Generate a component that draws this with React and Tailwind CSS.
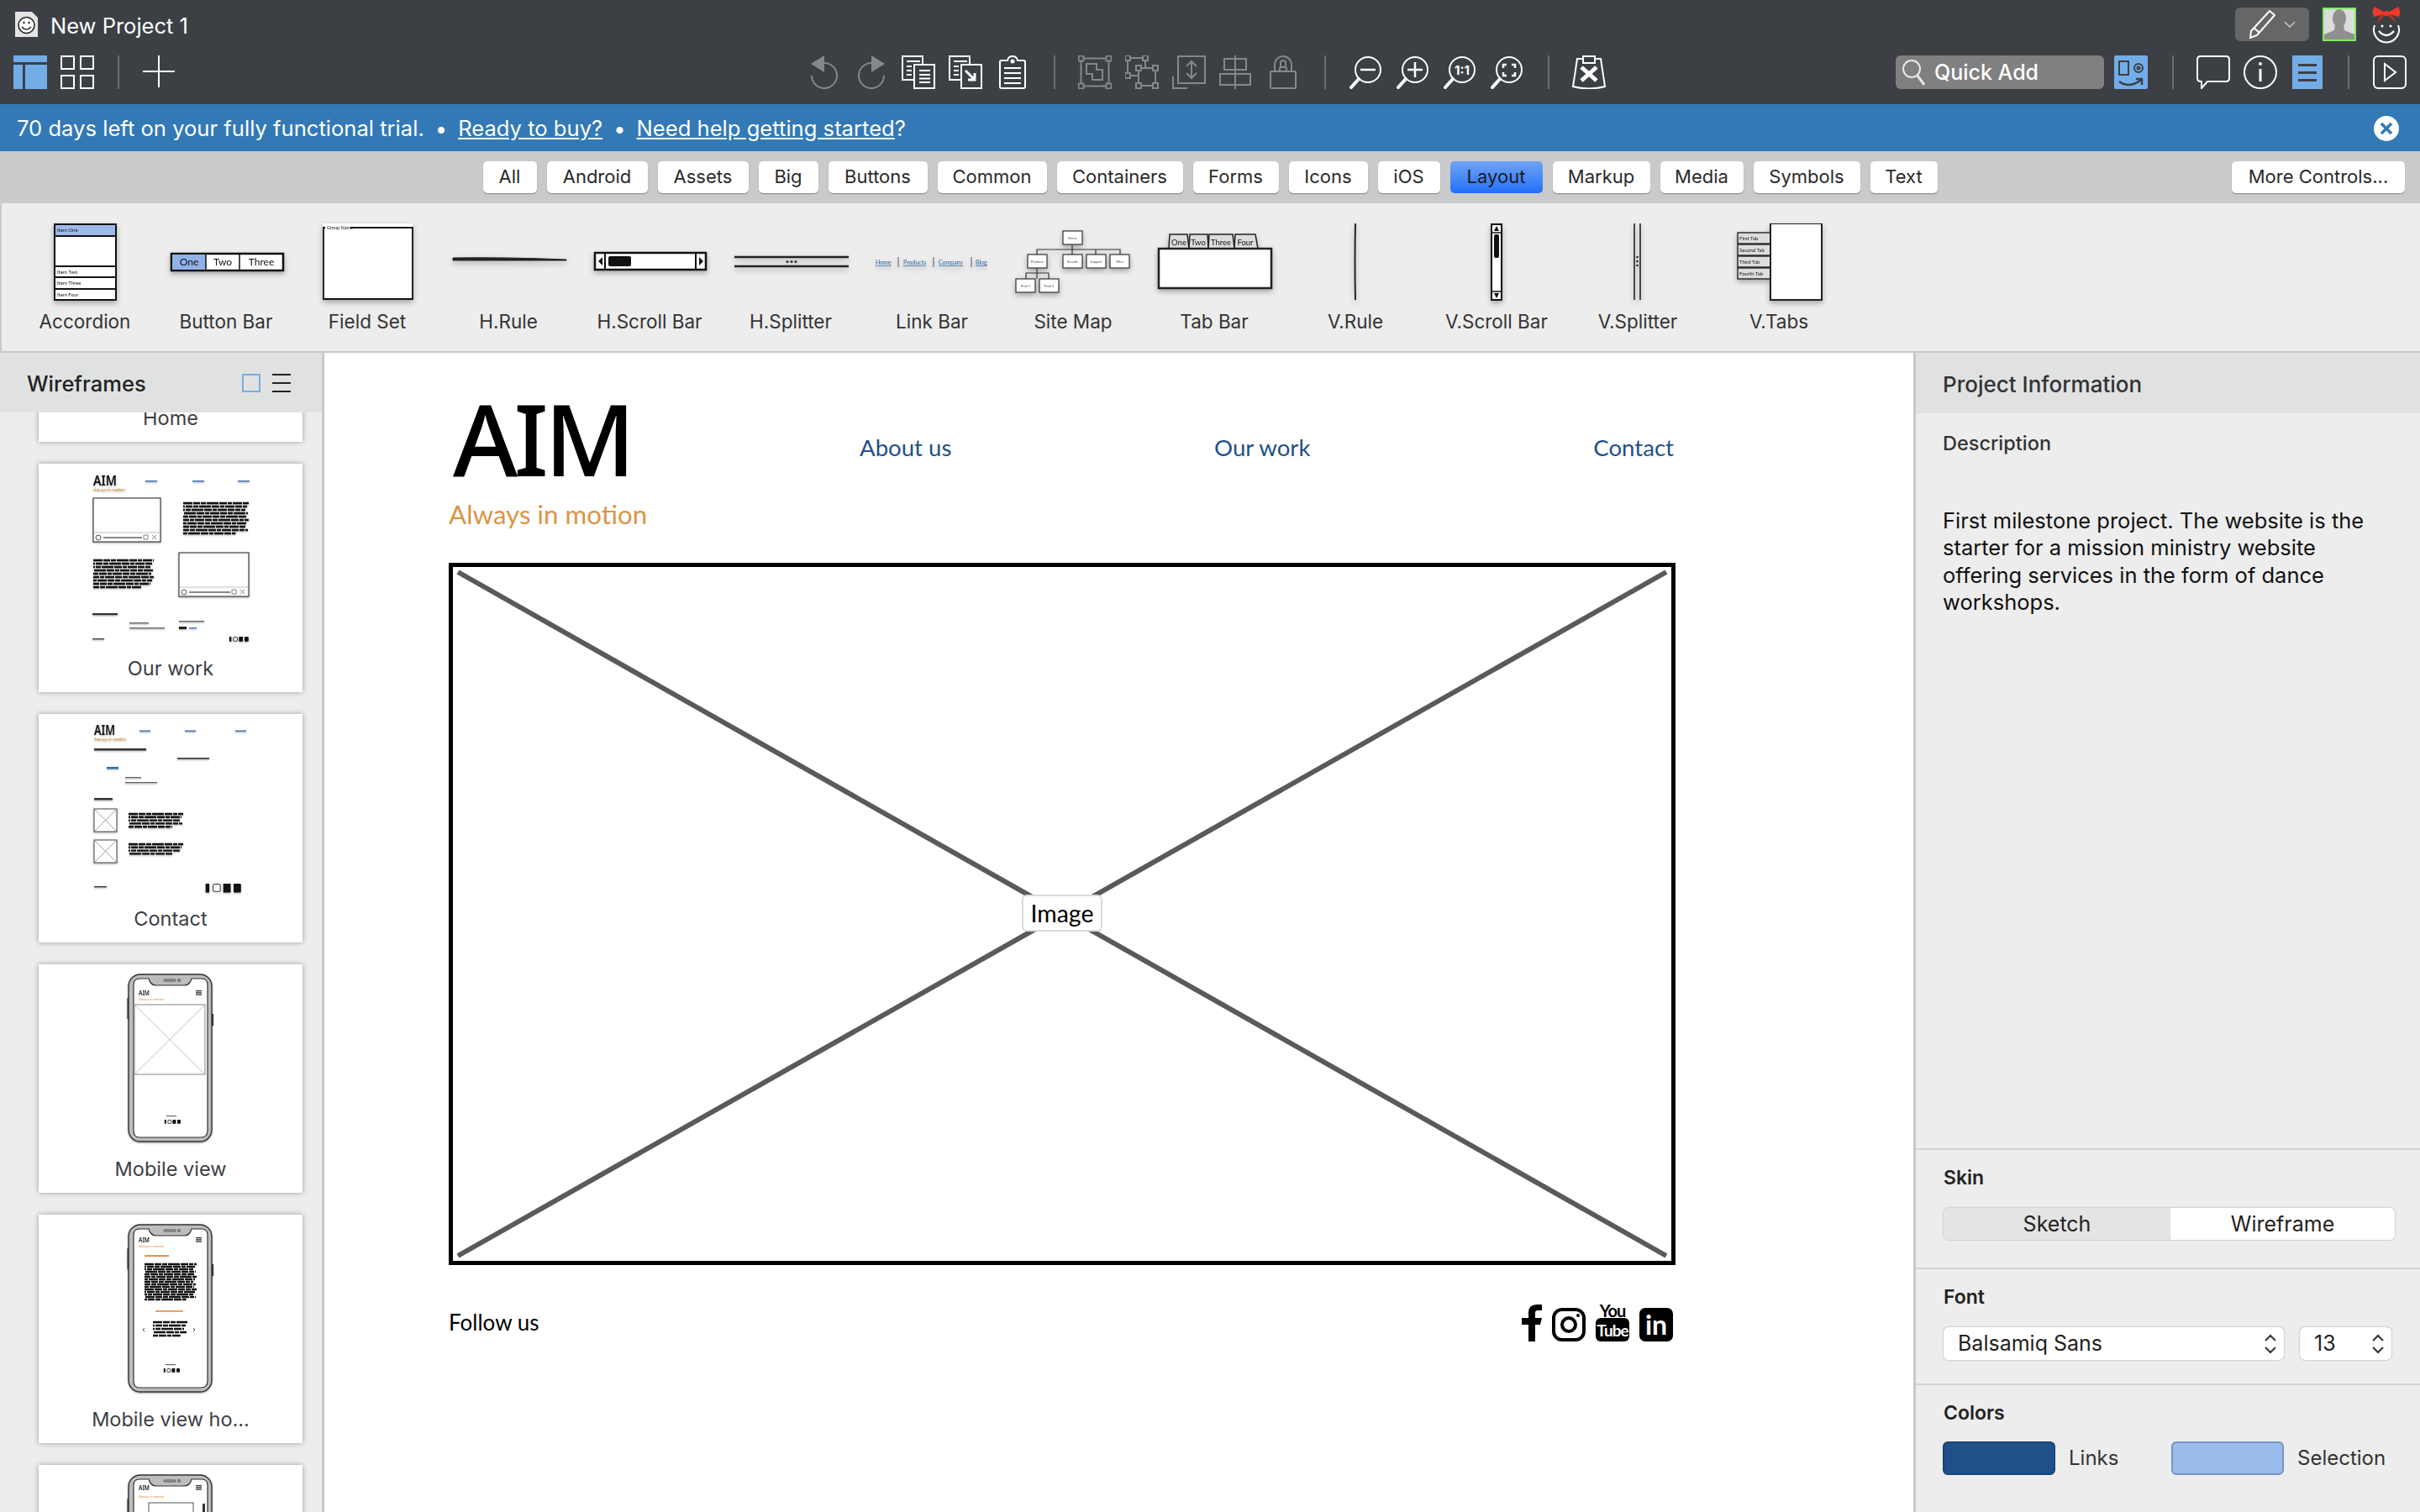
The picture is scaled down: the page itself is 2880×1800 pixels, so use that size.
import React from 'react';

const ui = { fontFamily: 'Inter, "Liberation Sans", sans-serif' };
const sketch = { fontFamily: 'Lato, "Open Sans", sans-serif' };

const filters = [
  ['All', 'w-[64px]'], ['Android', 'w-[120px]'], ['Assets', 'w-[108px]'], ['Big', 'w-[71px]'],
  ['Buttons', 'w-[118px]'], ['Common', 'w-[130px]'], ['Containers', 'w-[150px]'], ['Forms', 'w-[102px]'],
  ['Icons', 'w-[94px]'], ['iOS', 'w-[74px]'], ['Layout', 'w-[110px]'], ['Markup', 'w-[116px]'],
  ['Media', 'w-[99px]'], ['Symbols', 'w-[127px]'], ['Text', 'w-[80px]'],
];

const Sep = () => <div className="w-[2px] h-[40px] bg-[#6b6f73] shrink-0" />;

const Icon = ({ w = 40, children, className = 'text-white' }) => (
  <svg width={w} height="40" viewBox={`0 0 ${w} 40`} fill="none" stroke="currentColor" strokeWidth="2" className={`shrink-0 ${className}`}>
    {children}
  </svg>
);

const Magnifier = ({ children }) => (
  <Icon w={38}>
    <circle cx="22" cy="17" r="15" />
    <path d="M11 28 L2 38" strokeWidth="4" strokeLinecap="round" />
    {children}
  </Icon>
);

const Handle = ({ x, y }) => <rect x={x - 3} y={y - 3} width="6" height="6" fill="#3c4045" />;

function Toolbar() {
  const gray = 'text-[#84888c] ';
  return (
    <div className="flex items-center h-[40px] mt-[22px] pl-[16px]">
      {/* left view switch */}
      <div className="w-[40px] h-[40px] flex flex-col gap-[3px] shrink-0">
        <div className="h-[8px] bg-[#72ade8]" />
        <div className="flex-1 flex gap-[3px]">
          <div className="w-[11px] bg-[#72ade8]" />
          <div className="flex-1 bg-[#72ade8]" />
        </div>
      </div>
      <div className="w-[40px] h-[40px] ml-[16px] grid grid-cols-2 gap-x-[6px] gap-y-[6px] shrink-0">
        <div className="border-2 border-white" /><div className="border-2 border-white" />
        <div className="border-2 border-white" /><div className="border-2 border-white" />
      </div>
      <div className="ml-[28px]"><Sep /></div>
      <div className="ml-[28px]">
        <Icon w={38}><path d="M19 0 V38 M0 19 H38" /></Icon>
      </div>

      {/* edit group */}
      <div className="ml-[757px]">
        <Icon w={34} className={gray}>
          <path d="M16 9 A15 15 0 1 1 1 24" />
          <path d="M16 0 V20 L0 10 Z" fill="currentColor" stroke="none" />
        </Icon>
      </div>
      <div className="ml-[22px]">
        <Icon w={33} className={gray}>
          <path d="M16 9 A15 15 0 1 0 31 24" />
          <path d="M16 0 V20 L32 10 Z" fill="currentColor" stroke="none" />
        </Icon>
      </div>
      <div className="ml-[19px]">
        <Icon w={40}>
          <rect x="1" y="1" width="24" height="28" />
          <path d="M6 7 H22 M6 13 H12 M6 18 H12 M6 23 H12" />
          <rect x="15" y="11" width="24" height="28" fill="#3c4045" />
          <path d="M21 18 H34 M21 23 H34 M21 27.5 H34 M21 32 H34" />
        </Icon>
      </div>
      <div className="ml-[16px]">
        <Icon w={40}>
          <rect x="1" y="1" width="24" height="28" />
          <path d="M6 7 H22 M6 13 H12 M6 18 H12 M6 23 H12" />
          <rect x="15" y="11" width="24" height="28" fill="#3c4045" />
          <path d="M20 18 L31 29 M31 21 V29 H23" strokeWidth="3" />
        </Icon>
      </div>
      <div className="ml-[20px]">
        <Icon w={32}>
          <path d="M10 6 H3 Q1 6 1 8 V37 Q1 39 3 39 H29 Q31 39 31 37 V8 Q31 6 29 6 H22 Q21 1 16 1 Q11 1 10 6 Z" />
          <circle cx="16" cy="7" r="2.5" fill="currentColor" stroke="none" />
          <path d="M6 15 H26 M6 21 H26 M6 27 H26 M6 33 H26" />
        </Icon>
      </div>
      <div className="ml-[33px]"><Sep /></div>

      {/* arrange group */}
      <div className="ml-[27px]">
        <Icon w={40} className={gray}>
          <rect x="3.5" y="3.5" width="33" height="33" />
          <Handle x={3.5} y={3.5} /><Handle x={36.5} y={3.5} /><Handle x={3.5} y={36.5} /><Handle x={36.5} y={36.5} />
          <path d="M10 10 H22 V17 H29 V29 H17 V22 H10 Z" />
        </Icon>
      </div>
      <div className="ml-[16px]">
        <Icon w={40} className={gray}>
          <path d="M3 3 H24 V15 M3 3 V24 H16" />
          <rect x="16" y="15" width="20" height="21" />
          <Handle x={3} y={3} /><Handle x={24} y={3} /><Handle x={3} y={24} />
          <Handle x={16} y={15} /><Handle x={36} y={15} /><Handle x={16} y={36} /><Handle x={36} y={36} />
        </Icon>
      </div>
      <div className="ml-[16px]">
        <Icon w={40} className={gray}>
          <path d="M1 25 V39 H18" />
          <rect x="7" y="1" width="32" height="32" />
          <path d="M23 7 V27 M17 13 L23 7 L29 13 M17 21 L23 27 L29 21" />
        </Icon>
      </div>
      <div className="ml-[16px]">
        <Icon w={38} className={gray}>
          <path d="M19 0 V40" />
          <rect x="6" y="4" width="26" height="13" />
          <rect x="1" y="22" width="36" height="13" />
        </Icon>
      </div>
      <div className="ml-[22px]">
        <Icon w={32} className={gray}>
          <path d="M6 19 V11 A10 10 0 0 1 26 11 V19 M12 19 V14 M20 19 V14 M13 14 V9 A3 3 0 0 1 19 9 V14 Z" />
          <rect x="1" y="19" width="30" height="20" rx="1" />
        </Icon>
      </div>
      <div className="ml-[33px]"><Sep /></div>

      {/* zoom group */}
      <div className="ml-[28px] flex items-center gap-[18px] shrink-0">
        <Magnifier><path d="M13 17 H31" strokeWidth="2.5" /></Magnifier>
        <Magnifier><path d="M13 17 H31 M22 8 V26" strokeWidth="2.5" /></Magnifier>
        <Magnifier>
          <text x="22" y="22.5" textAnchor="middle" fontSize="15" fontWeight="700" fill="currentColor" stroke="none" fontFamily="Inter, sans-serif">1:1</text>
        </Magnifier>
        <Magnifier><path d="M15 15 V11 H19 M25 11 H29 V15 M29 20 V24 H25 M19 24 H15 V20" strokeWidth="2.5" /></Magnifier>
      </div>
      <div className="ml-[30px]"><Sep /></div>
      <div className="ml-[27px]">
        <Icon w={40}>
          <path d="M13 4 H6 L1 37 Q20 42 39 37 L34 4 H27" />
          <rect x="13" y="1" width="14" height="8" />
          <path d="M11 14 L29 30 M29 14 L11 30" strokeWidth="5" />
        </Icon>
      </div>

      {/* quick add and right side */}
      <div className="ml-[345px] w-[248px] h-[40px] bg-[#808080] rounded-[6px] flex items-center pl-[6px] gap-[10px] shrink-0">
        <svg width="30" height="32" viewBox="0 0 30 32" fill="none" stroke="#e8e8e8" strokeWidth="2"><circle cx="13" cy="12" r="10" /><path d="M20 20 L28 31" strokeWidth="3" /></svg>
        <span className="text-[25px] font-medium text-white leading-none" style={ui}>Quick Add</span>
      </div>
      <div className="ml-[12px] w-[40px] h-[40px] bg-[#72ade8] rounded-[2px] shrink-0">
        <svg width="40" height="40" viewBox="0 0 40 40" fill="none" stroke="#3c4045" strokeWidth="2">
          <rect x="6" y="7" width="11" height="16" /><circle cx="29" cy="15" r="5" /><circle cx="29" cy="15" r="1.5" />
          <path d="M6 31 Q18 40 32 29 M26 28 H33 V35" strokeWidth="2.5" />
        </svg>
      </div>
      <div className="ml-[29px]"><Sep /></div>
      <div className="ml-[27px]">
        <Icon w={40}>
          <path d="M5 1 H35 Q39 1 39 5 V27 Q39 31 35 31 H13 L6 39 V31 H5 Q1 31 1 27 V5 Q1 1 5 1 Z" />
        </Icon>
      </div>
      <div className="ml-[16px]">
        <Icon w={40}>
          <circle cx="20" cy="20" r="19" />
          <circle cx="20" cy="10" r="2" fill="currentColor" stroke="none" />
          <path d="M20 16 V31" strokeWidth="3" />
        </Icon>
      </div>
      <div className="ml-[18px] w-[36px] h-[40px] bg-[#72ade8] flex flex-col justify-center items-center gap-[6px] shrink-0">
        <div className="w-[22px] h-[3px] bg-[#3c4045]" />
        <div className="w-[22px] h-[3px] bg-[#3c4045]" />
        <div className="w-[22px] h-[3px] bg-[#3c4045]" />
      </div>
      <div className="ml-[30px]"><Sep /></div>
      <div className="ml-[28px]">
        <Icon w={40}>
          <rect x="1" y="1" width="38" height="38" rx="5" />
          <path d="M14 10 L27 20 L14 30 Z" />
        </Icon>
      </div>
    </div>
  );
}

function TitleRow() {
  return (
    <div className="flex items-center h-[44px] pt-[14px] pl-[18px] pr-[20px]">
      <svg width="27" height="30" viewBox="0 0 27 30" className="shrink-0">
        <path d="M0 0 H20 L27 7 V30 H0 Z" fill="#e4e4e4" />
        <circle cx="13.5" cy="16" r="9.5" fill="#fff" stroke="#222" strokeWidth="1.6" />
        <path d="M8 18 Q13.5 24 19 18" fill="none" stroke="#222" strokeWidth="1.6" />
        <circle cx="10.5" cy="13" r="1.2" fill="#222" /><circle cx="16.5" cy="13" r="1.2" fill="#222" />
      </svg>
      <span className="ml-[15px] mt-[3px] text-[25.5px] text-white leading-none" style={ui}>New Project 1</span>
      <div className="ml-auto flex items-center">
        <div className="w-[88px] h-[40px] bg-[#646668] rounded-[6px] flex items-center pl-[16px] gap-[10px]">
          <svg width="32" height="34" viewBox="0 0 32 34" fill="none" stroke="#fff" strokeWidth="2"><path d="M25 1 L31 6 L10 30 L2 33 L3 25 Z M6 21 L13 27" /></svg>
          <svg width="14" height="8" viewBox="0 0 14 8" fill="none" stroke="#c9c9c9" strokeWidth="1.5"><path d="M1 1 L7 7 L13 1" /></svg>
        </div>
        <div className="ml-[16px] w-[40px] h-[40px] border-2 border-[#7bf05d] bg-[#dcdcdc] overflow-hidden">
          <svg width="36" height="36" viewBox="0 0 36 36" fill="#8f8f8f"><ellipse cx="18" cy="11" rx="8" ry="11" /><path d="M13 18 H23 L24 25 L36 30 V36 H0 V30 L12 25 Z" /></svg>
        </div>
        <div className="ml-[16px]">
          <svg width="40" height="46" viewBox="0 0 40 46" fill="none">
            <path d="M20 10 L6 2 Q2 8 5 14 Z M20 10 L34 2 Q38 8 35 14 Z" fill="#ee3a2b" />
            <path d="M20 10 L8 22 L14 11 Z M20 10 L32 22 L26 11 Z" fill="#d22d20" />
            <circle cx="20" cy="10" r="3" fill="#ee3a2b" />
            <path d="M6 24 A15 15 0 1 0 34 24" stroke="#fff" strokeWidth="2" />
            <path d="M11 31 Q20 41 29 31" stroke="#fff" strokeWidth="2.5" />
            <circle cx="15" cy="25" r="1.5" fill="#fff" /><circle cx="25" cy="25" r="1.5" fill="#fff" />
          </svg>
        </div>
      </div>
    </div>
  );
}

function TrialBanner() {
  return (
    <div className="h-[56px] bg-[#3379b5] flex items-center pt-[2px] pl-[20px] pr-[25px] text-white text-[25.6px]" style={ui}>
      <span>70 days left on your fully functional trial.</span>
      <span className="mx-[13px]">•</span>
      <span className="underline">Ready to buy?</span>
      <span className="mx-[13px]">•</span>
      <span><span className="underline">Need help getting started</span>?</span>
      <svg width="30" height="30" viewBox="0 0 30 30" className="ml-auto">
        <circle cx="15" cy="15" r="15" fill="#fff" />
        <path d="M9 9 L21 21 M21 9 L9 21" stroke="#3379b5" strokeWidth="3.5" />
      </svg>
    </div>
  );
}

function FilterBar() {
  return (
    <div className="h-[60px] bg-[#c9cacc] flex items-center pt-[1px]" style={ui}>
      <div className="flex-1" />
      <div className="flex gap-[12px]">
        {filters.map(([name, w]) => (
          <div
            key={name}
            className={`${w} h-[38px] rounded-[5px] flex items-center justify-center text-[22px] ${
              name === 'Layout'
                ? 'bg-gradient-to-b from-[#6fa3f3] to-[#1f6ff8] text-[#1b1b1b]'
                : 'bg-white text-[#2a2a2a] shadow-[0_1px_1px_rgba(0,0,0,0.35)]'
            }`}
          >
            {name}
          </div>
        ))}
      </div>
      <div className="flex-1 flex justify-end">
        <div className="w-[206px] h-[38px] mr-[18px] rounded-[5px] bg-white shadow-[0_1px_1px_rgba(0,0,0,0.35)] flex items-center justify-center text-[22px] text-[#2a2a2a]">
          More Controls...
        </div>
      </div>
    </div>
  );
}

// small sketches of the library controls, all share a 168x98 box
const Label = ({ x, y, s = 6, a, fill = '#111', children, u }) => (
  <text x={x} y={y} fontSize={s} textAnchor={a} fill={fill} textDecoration={u ? 'underline' : undefined} fontFamily="Lato, sans-serif" stroke="none">{children}</text>
);

const library = [
  ['Accordion', (
    <g>
      <rect x="48" y="1" width="73" height="90" fill="#fff" stroke="#111" strokeWidth="2" />
      <rect x="48" y="1" width="73" height="14" fill="#9dbbe9" stroke="#111" strokeWidth="2" />
      <path d="M48 51 H121 M48 64 H121 M48 78 H121" stroke="#111" strokeWidth="1.8" />
      <Label x="51" y="10">Item One</Label><Label x="51" y="60">Item Two</Label>
      <Label x="51" y="73">Item Three</Label><Label x="51" y="87">Item Four</Label>
    </g>
  )],
  ['Button Bar', (
    <g>
      <rect x="19" y="36" width="133" height="20" fill="#fff" stroke="#111" strokeWidth="2.5" />
      <rect x="20" y="37" width="40" height="18" fill="#8fb2e8" />
      <path d="M60 36 V56 M100 36 V56" stroke="#111" strokeWidth="1.5" />
      <Label x="40" y="50" s={12} a="middle">One</Label><Label x="80" y="50" s={12} a="middle">Two</Label><Label x="126" y="50" s={12} a="middle">Three</Label>
    </g>
  )],
  ['Field Set', (
    <g>
      <rect x="31" y="0" width="107" height="91" fill="#fff" />
      <path d="M34 5 H32 V90 H138 V5 H64" fill="none" stroke="#111" strokeWidth="1.8" />
      <Label x="36" y="6.5" s={5.5}>Group Name</Label>
    </g>
  )],
  ['H.Rule', <path d="M18 41 Q80 40 153 43 L153 44 Q80 44 18 44 Z" fill="#222" stroke="#222" strokeWidth="1" />],
  ['H.Scroll Bar', (
    <g>
      <rect x="19" y="35" width="132" height="20" fill="#fff" stroke="#111" strokeWidth="2.5" />
      <path d="M31 35 V55 M139 35 V55" stroke="#111" strokeWidth="2" />
      <rect x="35" y="39" width="27" height="12" fill="#111" rx="2" />
      <path d="M28 40 V50 L23 45 Z M143 40 V50 L148 45 Z" fill="#111" />
    </g>
  )],
  ['H.Splitter', (
    <g>
      <path d="M17 40 H153 M17 51 H153" stroke="#222" strokeWidth="2.5" />
      <circle cx="80" cy="45.5" r="1.5" fill="#333" /><circle cx="85" cy="45.5" r="1.5" fill="#333" /><circle cx="90" cy="45.5" r="1.5" fill="#333" />
    </g>
  )],
  ['Link Bar', (
    <g>
      <Label x="17" y="49" s={7} fill="#2d68aa" u>Home</Label>
      <Label x="50" y="49" s={7} fill="#2d68aa" u>Products</Label>
      <Label x="92" y="49" s={7} fill="#2d68aa" u>Company</Label>
      <Label x="136" y="49" s={7} fill="#2d68aa" u>Blog</Label>
      <path d="M44 40 V52 M86 40 V52 M131 40 V52" stroke="#555" strokeWidth="1" />
    </g>
  )],
  ['Site Map', (
    <g stroke="#333" strokeWidth="1.2" fill="#fff">
      <path d="M83 26 V37 M41 37 V31 H140 V37 M111 31 V37 M41 53 V66 M28 66 V59 H55 V66" fill="none" />
      {[[72, 9, 'Home'], [30, 37, 'Products'], [72, 37, 'Results'], [100, 37, 'Support'], [128, 37, 'Who'], [16, 66, 'Prod 1'], [44, 66, 'Prod 2']].map(([x, y, t]) => (
        <g key={t}>
          <rect x={x} y={y} width="23" height="16" />
          <Label x={x + 11.5} y={y + 9.5} s={4} a="middle" fill="#555">{t}</Label>
        </g>
      ))}
    </g>
  )],
  ['Tab Bar', (
    <g stroke="#222" strokeWidth="1.5">
      <path d="M30 30 L31 13 H52 L54 30 Z M54 30 L55 13 H76 L77 30 Z M77 30 L78 13 H106 L108 30 Z M108 30 L109 13 H133 L136 30 Z" fill="#ddd" />
      <rect x="18" y="30" width="134" height="47" fill="#fff" strokeWidth="2.5" />
      <Label x="42" y="26" s={9.5} a="middle">One</Label><Label x="65" y="26" s={9.5} a="middle">Two</Label>
      <Label x="92" y="26" s={9.5} a="middle">Three</Label><Label x="121" y="26" s={9.5} a="middle">Four</Label>
    </g>
  )],
  ['V.Rule', <path d="M84 0 Q83 45 84 91" fill="none" stroke="#222" strokeWidth="2" />],
  ['V.Scroll Bar', (
    <g>
      <rect x="78" y="1" width="12" height="90" fill="#fff" stroke="#111" strokeWidth="2" />
      <path d="M78 11 H90 M78 81 H90" stroke="#111" strokeWidth="1.5" />
      <rect x="81" y="13" width="6" height="28" fill="#111" rx="2" />
      <path d="M84 3 L87 9 H81 Z M84 89 L87 83 H81 Z" fill="#111" />
    </g>
  )],
  ['V.Splitter', (
    <g>
      <path d="M80 0 V91 M87 0 V91" stroke="#222" strokeWidth="1.6" />
      <circle cx="83.5" cy="40" r="1.3" fill="#222" /><circle cx="83.5" cy="45" r="1.3" fill="#222" /><circle cx="83.5" cy="50" r="1.3" fill="#222" />
    </g>
  )],
  ['V.Tabs', (
    <g stroke="#222" strokeWidth="1.4">
      {[[11, 'First Tab'], [25, 'Second Tab'], [39, 'Third Tab'], [53, 'Fourth Tab']].map(([y, t]) => (
        <g key={t}>
          <rect x="35" y={y} width="40" height="13" fill="#ddd" />
          <Label x="37" y={y + 9} s={6}>{t}</Label>
        </g>
      ))}
      <rect x="74" y="0" width="61" height="91" fill="#fff" strokeWidth="2" />
    </g>
  )],
];

function Library() {
  return (
    <div className="h-[176px] mt-[2px] bg-[#ededed] border-l-2 border-[#c9cacc] flex pl-[15px]" style={ui}>
      {library.map(([name, sketchEl]) => (
        <div key={name} className="w-[168px] flex flex-col items-center pt-[24px] shrink-0">
          <svg width="168" height="98" viewBox="0 0 168 98" className="drop-shadow-[0_3px_3px_rgba(0,0,0,0.3)] blur-[0.4px]">{sketchEl}</svg>
          <span className="mt-[8px] text-[22.5px] text-[#333] leading-none">{name}</span>
        </div>
      ))}
    </div>
  );
}

// ---- sidebar thumbnails, drawn in card coordinates (314 wide) ----
const TextBlock = ({ x, y, w, lines, gap = 4 }) => (
  <g stroke="#111" strokeWidth="2.4" strokeDasharray="11 1 8 1 6 1 14 1 9 1 5 1">
    {Array.from({ length: lines }, (_, i) => (
      <path key={i} d={`M${x} ${y + i * gap} h${i === lines - 1 ? w * 0.8 : w - ((i * 7) % 5)}`} strokeDashoffset={i * 9} />
    ))}
  </g>
);

const MiniVideo = ({ x, y, w, h }) => (
  <g>
    <rect x={x} y={y} width={w} height={h} fill="#fff" stroke="#444" strokeWidth="1.2" />
    <path d={`M${x} ${y + h - 11} H${x + w}`} stroke="#999" strokeWidth="0.6" />
    <path d={`M${x + 12} ${y + h - 5} H${x + w - 22}`} stroke="#888" strokeWidth="2" />
    <circle cx={x + 6} cy={y + h - 5} r="3" fill="none" stroke="#555" />
    <path d={`M${x + w - 20} ${y + h - 8} h5 v5 h-5 Z M${x + w - 10} ${y + h - 8} l5 5 M${x + w - 5} ${y + h - 8} l-5 5`} fill="none" stroke="#666" strokeWidth="0.8" />
  </g>
);

const MiniHead = ({ x, top, len, sub, navs, navY, navW = 14 }) => (
  <g>
    <text x={x} y={top} fontSize="16" fontWeight="600" textLength={len} lengthAdjust="spacingAndGlyphs" fill="#111" fontFamily="Noto Sans, sans-serif">AIM</text>
    <text x={x} y={sub} fontSize="5" fill="#d98f3f" fontFamily="Lato, sans-serif">Always in motion</text>
    {navs.map((nx) => (
      <rect key={nx} x={nx} y={navY} width={navW} height="1.6" fill="#4b78b3" />
    ))}
  </g>
);

const MiniImage = ({ x, y, w, h, c = '#666' }) => (
  <g>
    <rect x={x} y={y} width={w} height={h} fill="#fff" stroke={c} strokeWidth="1.2" />
    <path d={`M${x} ${y} L${x + w} ${y + h} M${x + w} ${y} L${x} ${y + h}`} stroke={c} strokeWidth="0.6" />
  </g>
);

const MiniSocial = ({ x, y, s = 1 }) => (
  <g fill="#111">
    <rect x={x + s} y={y} width={2.5 * s} height={6 * s} />
    <rect x={x + 6 * s} y={y + 0.5} width={5 * s} height={5 * s} rx="1" fill="none" stroke="#111" strokeWidth="0.8" />
    <rect x={x + 13 * s} y={y} width={5 * s} height={6 * s} />
    <rect x={x + 20 * s} y={y} width={5 * s} height={6 * s} rx="1" />
  </g>
);

const Phone = ({ logoY = 37, subY = 43, children }) => (
  <g>
    <rect x="105.5" y="40" width="2" height="25" fill="#333" />
    <rect x="206" y="59" width="2" height="14" fill="#333" />
    <rect x="107" y="12" width="99" height="199" rx="14" fill="#bdbdbd" stroke="#333" strokeWidth="1.4" />
    <path d="M120 17 H131 Q133 25 140 25 H173 Q180 25 182 17 H194 Q201 17 201 24 V198 Q201 206 193 206 H120 Q113 206 113 198 V24 Q113 17 120 17 Z" fill="#fff" stroke="#333" strokeWidth="1.2" />
    <rect x="149" y="18" width="14" height="2" rx="1" fill="none" stroke="#333" strokeWidth="0.8" />
    <circle cx="167" cy="19" r="1.5" fill="none" stroke="#333" strokeWidth="0.8" />
    <text x="119" y={logoY} fontSize="8" fontWeight="600" textLength="13" lengthAdjust="spacingAndGlyphs" fill="#111" fontFamily="Noto Sans, sans-serif">AIM</text>
    <text x="119" y={subY} fontSize="4" fill="#e0964c" fontFamily="Lato, sans-serif">Always in motion</text>
    <g fill="#333"><rect x="187" y={logoY - 6} width="7" height="1.3" /><rect x="187" y={logoY - 3.8} width="7" height="1.3" /><rect x="187" y={logoY - 1.6} width="7" height="1.3" /></g>
    {children}
  </g>
);

const Bar = ({ x, y, w, h = 1.4, c = '#666' }) => <rect x={x} y={y} width={w} height={h} fill={c} />;

const thumbs = {
  'Our work': (
    <g>
      <MiniHead x={65} top={26} len={28} sub={33} navs={[127, 183, 237]} navY={20} />
      <MiniVideo x={65} y={41} w={80} h={52} />
      <TextBlock x={172} y={47} w={78} lines={10} />
      <TextBlock x={65} y={115} w={72} lines={9} />
      <MiniVideo x={167} y={106} w={83} h={52} />
      <Bar x={64} y={178} w={30} h={2.2} c="#333" />
      <Bar x={108} y={189} w={23} /><Bar x={108} y={195} w={42} />
      <Bar x={167} y={187} w={30} /><Bar x={167} y={194} w={9} h={3} c="#222" /><Bar x={179} y={195} w={9} c="#4b78b3" />
      <Bar x={64} y={208} w={14} c="#444" />
      <MiniSocial x={226} y={206} s={0.95} />
    </g>
  ),
  Contact: (
    <g>
      <MiniHead x={66} top={25} len={25} sub={32} navs={[120, 174, 234]} navY={19.5} navW={13} />
      <Bar x={66} y={41} w={62} h={2.4} c="#333" />
      <Bar x={165} y={52} w={38} h={1.8} c="#444" />
      <Bar x={81} y={63} w={14} h={2.4} c="#2d68aa" />
      <Bar x={103} y={75} w={19} h={1.3} /><Bar x={103} y={81} w={38} h={1.3} />
      <Bar x={66} y={100} w={22} h={2.4} c="#333" />
      <MiniImage x={66} y={113} w={27} h={27} />
      <TextBlock x={107} y={119} w={65} lines={5} gap={3.8} />
      <MiniImage x={66} y={150} w={27} h={27} />
      <TextBlock x={107} y={155} w={65} lines={4} gap={3.8} />
      <Bar x={66} y={205} w={15} c="#333" />
      <MiniSocial x={197} y={202} s={1.75} />
    </g>
  ),
  'Mobile view': (
    <Phone>
      <MiniImage x={114} y={48} w={84} h={83} c="#999" />
      <Bar x={152} y={180} w={12} h={1.2} />
      <MiniSocial x={149} y={185} s={0.8} />
    </Phone>
  ),
  'Mobile view ho...': (
    <Phone logoY={33} subY={39}>
      <Bar x={126} y={48} w={29} h={2.2} c="#e29a52" />
      <TextBlock x={126} y={59} w={62} lines={15} gap={3} />
      <Bar x={139} y={114} w={33} h={1.8} c="#e29a52" />
      <TextBlock x={136} y={128} w={41} lines={5} />
      <path d="M126 135 l-2 2 l2 2 M184 135 l2 2 l-2 2" stroke="#444" fill="none" />
      <Bar x={151} y={178} w={12} h={1.2} />
      <MiniSocial x={148} y={183} s={0.8} />
    </Phone>
  ),
  tail: (
    <Phone logoY={30} subY={39}>
      <rect x="131" y="45" width="53" height="100" fill="#fff" stroke="#555" strokeWidth="1" />
      <rect x="195" y="46" width="3" height="12" fill="#333" />
    </Phone>
  ),
};

const cards = [
  ['Home', null], ['Our work', thumbs['Our work']], ['Contact', thumbs.Contact],
  ['Mobile view', thumbs['Mobile view']], ['Mobile view ho...', thumbs['Mobile view ho...']], ['', thumbs.tail],
];

function WireframesPanel() {
  return (
    <aside className="w-[386px] shrink-0 bg-[#ededed] border-r-[3px] border-[#c8c8c8] flex flex-col overflow-hidden" style={ui}>
      <div className="h-[71px] shrink-0 bg-[#e0e2e2] flex items-center pl-[32px] relative z-10">
        <span className="text-[25.5px] font-medium text-[#222] pt-[4px]">Wireframes</span>
        <div className="ml-auto mr-[37px] flex items-center gap-[14px]">
          <div className="w-[22px] h-[22px] border-2 border-[#72ade8]" />
          <div className="w-[22px] h-[22px] flex flex-col justify-between">
            <div className="h-[2px] bg-[#222]" /><div className="h-[2px] bg-[#222]" /><div className="h-[2px] bg-[#222]" />
          </div>
        </div>
      </div>
      <div className="mt-[-237px] pl-[46px] w-[360px] flex flex-col gap-[26px]">
        {cards.map(([name, art], i) => (
          <div key={i} className="w-[314px] h-[272px] shrink-0 bg-white shadow-[0_0_6px_rgba(0,0,0,0.35)] relative">
            <svg width="314" height="225" viewBox="0 0 314 225" className="drop-shadow-[0_1px_1px_rgba(0,0,0,0.35)] blur-[0.5px]">{art}</svg>
            <div className="absolute left-0 right-0 bottom-[13px] text-center text-[23.5px] text-[#3c4045] leading-[30px]">{name}</div>
          </div>
        ))}
      </div>
    </aside>
  );
}

function Canvas() {
  return (
    <main className="flex-1 bg-white pl-[148px] pt-[58px]" style={sketch}>
      <div className="w-[1460px]">
        <div className="flex items-start h-[192px]">
          <div className="w-[489px] shrink-0">
            <div className="text-[118px] leading-[87px] h-[87px] pl-[5px] text-black font-medium tracking-[-5px]" style={{ fontFamily: '"Noto Sans", sans-serif' }}>AIM</div>
            <div className="mt-[27px] text-[31.3px] leading-[40px] text-[#dc9446]">Always in motion</div>
          </div>
          <nav className="flex-1 flex pt-[40px] text-[27.6px] leading-[30px] text-[#1f5089]">
            <span className="w-[422px]">About us</span>
            <span className="flex-1">Our work</span>
            <span className="pr-[2px]">Contact</span>
          </nav>
        </div>
        <div className="relative h-[836px] border-[5px] border-black">
          <svg className="w-full h-full" viewBox="0 0 1450 826" preserveAspectRatio="none">
            <path d="M6 6 L1444 820 M1444 6 L6 820" stroke="#5a5a5a" strokeWidth="6" fill="none" />
          </svg>
          <div className="absolute left-[677px] top-[390px] w-[96px] h-[44px] bg-white border-2 border-[#dadada] rounded-[6px] flex items-center justify-center text-[28.5px] text-black">Image</div>
        </div>
        <div className="flex items-center justify-between mt-[44px] h-[48px]">
          <span className="text-[26px] text-black">Follow us</span>
          <div className="flex items-end gap-[12px] pr-[3px]">
            <svg width="24" height="44" viewBox="0 0 24 44" fill="#000"><path d="M8 44 V24 H0 V16 H8 V10 Q8 0 18 0 H24 V7 H19 Q16 7 16 10 V16 H24 L22 24 H16 V44 Z" /></svg>
            <svg width="40" height="40" viewBox="0 0 40 40" fill="none" stroke="#000" strokeWidth="4"><rect x="2" y="2" width="36" height="36" rx="10" /><circle cx="20" cy="20" r="8" /><circle cx="31" cy="9" r="2" fill="#000" stroke="none" /></svg>
            <div className="w-[40px] flex flex-col items-center leading-none">
              <span className="text-[20px] leading-[18px] font-bold text-black tracking-[-1px]">You</span>
              <span className="w-[40px] h-[28px] bg-black rounded-[6px] text-white text-[19px] font-bold flex items-center justify-center tracking-[-1px]">Tube</span>
            </div>
            <div className="w-[40px] h-[40px] bg-black rounded-[7px] text-white font-bold text-[32px] leading-none flex items-center justify-center">in</div>
          </div>
        </div>
      </div>
    </main>
  );
}

const Stepper = () => (
  <svg width="16" height="26" viewBox="0 0 16 26" fill="none" stroke="#333" strokeWidth="2"><path d="M2 9 L8 3 L14 9 M2 17 L8 23 L14 17" /></svg>
);

function InfoPanel() {
  return (
    <aside className="w-[603px] shrink-0 bg-[#ededed] border-l-[3px] border-[#c8c8c8] flex flex-col text-[#222]" style={ui}>
      <div className="h-[72px] shrink-0 bg-[#e0e2e2] pl-[32px] pt-[20px] text-[26px] font-medium leading-[36px] text-[#333]">Project Information</div>
      <div className="flex-1 pl-[32px] pr-[20px]">
        <div className="mt-[20px] text-[23.5px] font-medium leading-[32px] text-[#333]">Description</div>
        <p className="mt-[60px] w-[525px] text-[25.5px] leading-[32.3px] text-[#111]">
          First milestone project. The website is the starter for a mission ministry website offering services in the form of dance workshops.
        </p>
      </div>
      <section className="h-[142px] shrink-0 border-t-2 border-[#d2d2d2] pl-[33px] pt-[20px]">
        <div className="text-[23px] font-semibold leading-[26px]">Skin</div>
        <div className="mt-[23px] w-[537px] h-[38px] rounded-[6px] overflow-hidden flex text-[25px] shadow-[0_0_2px_rgba(0,0,0,0.4)]">
          <div className="w-[270px] bg-[#e4e4e4] flex items-center justify-center pt-[1px]">Sketch</div>
          <div className="flex-1 bg-white flex items-center justify-center pt-[1px]">Wireframe</div>
        </div>
      </section>
      <section className="h-[138px] shrink-0 border-t-2 border-[#d2d2d2] pl-[33px] pt-[20px]">
        <div className="text-[23px] font-semibold leading-[26px]">Font</div>
        <div className="mt-[23px] flex gap-[19px]">
          <div className="w-[405px] h-[39px] bg-white rounded-[6px] shadow-[0_0_2px_rgba(0,0,0,0.4)] flex items-center pl-[17px] pr-[8px] text-[25px] justify-between">
            <span>Balsamiq Sans</span><Stepper />
          </div>
          <div className="w-[109px] h-[39px] bg-white rounded-[6px] shadow-[0_0_2px_rgba(0,0,0,0.4)] flex items-center pl-[17px] pr-[8px] text-[25px] justify-between">
            <span>13</span><Stepper />
          </div>
        </div>
      </section>
      <section className="h-[153px] shrink-0 border-t-2 border-[#d2d2d2] pl-[32px] pt-[20px]">
        <div className="text-[23px] font-semibold leading-[26px] pl-[1px]">Colors</div>
        <div className="mt-[21px] flex items-center text-[24px] text-[#333]">
          <div className="w-[134px] h-[40px] bg-[#1f5089] border-2 border-[#1b4475] rounded-[6px]" />
          <span className="ml-[16px] w-[122px]">Links</span>
          <div className="w-[134px] h-[40px] bg-[#9bbbea] border-2 border-[#7393c4] rounded-[6px]" />
          <span className="ml-[16px]">Selection</span>
        </div>
      </section>
    </aside>
  );
}

export default function App() {
  return (
    <div className="w-[2880px] h-[1800px] overflow-hidden flex flex-col bg-[#c9cacc]">
      <div className="h-[124px] shrink-0 bg-[#3c4045]">
        <TitleRow />
        <Toolbar />
      </div>
      <TrialBanner />
      <FilterBar />
      <Library />
      <div className="mt-[2px] h-[1380px] flex overflow-hidden">
        <WireframesPanel />
        <Canvas />
        <InfoPanel />
      </div>
    </div>
  );
}
